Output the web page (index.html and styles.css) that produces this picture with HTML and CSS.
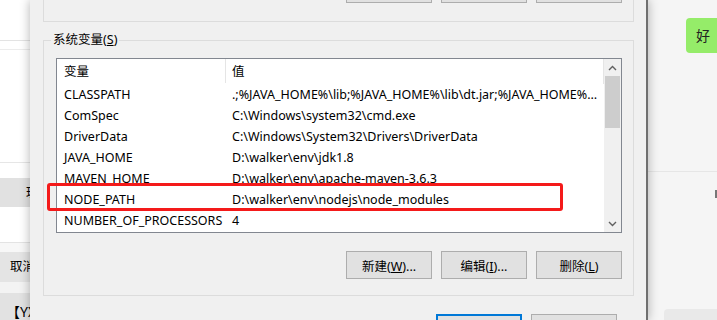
FILE: index.html
```html
<!DOCTYPE html>
<html lang="zh-CN">
<head>
  <meta charset="UTF-8" />
  <title>环境变量</title>
  <link rel="stylesheet" href="styles.css">
</head>
<body>
  <div class="screen">
    <div class="bg-app">
      <div class="bg-block bg-top"></div>
      <div class="bg-block bg-gap"></div>
      <div class="bg-block bg-main"></div>
      <div class="bg-block bg-gap2"></div>
      <div class="bg-block bg-tab">理</div>
      <div class="bg-block bg-main2"></div>
      <div class="bg-block bg-cancel">取消</div>
      <div class="bg-block bg-gap3"></div>
      <div class="bg-block bg-foot">【YX</div>
    </div>

    <div class="dialog">
      <div class="group group-user">
        <div class="btn-row btn-row-top">
          <button class="btn"></button>
          <button class="btn"></button>
          <button class="btn"></button>
        </div>
      </div>

      <div class="group group-sys">
        <div class="group-label">系统变量(<u>S</u>)</div>
        <div class="list">
          <div class="list-body">
            <div class="list-head">
              <span class="col-name">变量</span>
              <span class="col-value">值</span>
            </div>
            <div class="list-row"><span class="col-name">CLASSPATH</span><span class="col-value">.;%JAVA_HOME%\lib;%JAVA_HOME%\lib\dt.jar;%JAVA_HOME%\lib\tools.jar</span></div>
            <div class="list-row"><span class="col-name">ComSpec</span><span class="col-value">C:\Windows\system32\cmd.exe</span></div>
            <div class="list-row"><span class="col-name">DriverData</span><span class="col-value">C:\Windows\System32\Drivers\DriverData</span></div>
            <div class="list-row"><span class="col-name">JAVA_HOME</span><span class="col-value">D:\walker\env\jdk1.8</span></div>
            <div class="list-row"><span class="col-name">MAVEN_HOME</span><span class="col-value">D:\walker\env\apache-maven-3.6.3</span></div>
            <div class="list-row"><span class="col-name">NODE_PATH</span><span class="col-value">D:\walker\env\nodejs\node_modules</span></div>
            <div class="list-row"><span class="col-name">NUMBER_OF_PROCESSORS</span><span class="col-value">4</span></div>
            <div class="list-row"><span class="col-name">OS</span><span class="col-value">Windows_NT</span></div>
          </div>
          <div class="scrollbar">
            <div class="sb-arrow">
              <svg width="9" height="6" viewBox="0 0 9 6"><path d="M1 5 L4.5 1.5 L8 5" fill="none" stroke="#606060" stroke-width="1.4"/></svg>
            </div>
            <div class="sb-thumb"></div>
            <div class="sb-track"></div>
            <div class="sb-arrow">
              <svg width="9" height="6" viewBox="0 0 9 6"><path d="M1 1 L4.5 4.5 L8 1" fill="none" stroke="#606060" stroke-width="1.4"/></svg>
            </div>
          </div>
        </div>

        <div class="btn-row">
          <button class="btn">新建(<u>W</u>)...</button>
          <button class="btn">编辑(<u>I</u>)...</button>
          <button class="btn">删除(<u>L</u>)</button>
        </div>

        <div class="highlight"></div>
      </div>

      <div class="dialog-footer">
        <button class="btn btn-default"></button>
        <button class="btn"></button>
      </div>
    </div>

    <div class="chat">
      <div class="bubble">好</div>
      <div class="chat-line"></div>
      <div class="chat-mark"></div>
      <div class="chat-input"></div>
    </div>
  </div>
</body>
</html>
```

FILE: styles.css
```css
body {
  margin: 0;
  overflow: hidden;
  font-family: "Noto Sans", "Noto Sans CJK SC", sans-serif;
  font-size: 12.5px;
  color: #000;
}

.screen {
  display: flex;
  width: 717px;
  height: 320px;
  overflow: hidden;
  background: #f5f5f5;
}

/* background window on the left */
.bg-app {
  width: 30px;
  flex-shrink: 0;
  overflow: hidden;
  background: #fff;
  white-space: nowrap;
}

.bg-block {
  box-sizing: border-box;
}

.bg-top {
  height: 41px;
  border-bottom: 1px solid #e3e3e3;
}

.bg-gap {
  height: 9px;
  border-bottom: 1px solid #ececec;
}

.bg-main {
  height: 113px;
  border-bottom: 1px solid #e6e6e6;
}

.bg-gap2 {
  height: 15px;
}

.bg-tab {
  height: 29px;
  line-height: 29px;
  padding-left: 26px;
  background: #e1e1e1;
}

.bg-main2 {
  height: 36px;
  border-bottom: 1px solid #e3e3e3;
}

.bg-cancel {
  height: 39px;
  line-height: 30px;
  padding-top: 9px;
  padding-left: 10px;
  background: linear-gradient(#f7f7f7 0, #f7f7f7 9px, #e4e4e4 9px);
}

.bg-gap3 {
  height: 11px;
  background: #f3f3f3;
}

.bg-foot {
  height: 40px;
  line-height: 38px;
  padding-left: 6px;
  background: #e2e2e2;
  font-size: 14px;
}

/* dialog */
.dialog {
  position: relative;
  z-index: 1;
  width: 618px;
  flex-shrink: 0;
  box-sizing: border-box;
  padding: 0 12px 0 13px;
  background: #f0f0f0;
  border-right: 2px solid #6f6f6f;
  box-shadow: 0 0 10px rgba(0, 0, 0, 0.3);
}

.group {
  border: 1px solid #dcdcdc;
}

.group-user {
  display: flow-root;
  height: 21px;
  border-top: none;
  padding-right: 11px;
}

.btn-row {
  display: flex;
  justify-content: flex-end;
  gap: 9px;
}

.btn-row-top {
  margin-top: -25px;
}

.btn {
  width: 86px;
  height: 28px;
  box-sizing: border-box;
  padding: 0;
  border: 1px solid #adadad;
  background: #e1e1e1;
  font-family: "Noto Sans", "Noto Sans CJK SC", sans-serif;
  font-size: 12.5px;
  color: #000;
}

.group-sys {
  position: relative;
  margin-top: 18px;
  padding: 17px 11px 16px 12px;
}

.group-label {
  position: absolute;
  top: -10px;
  left: 7px;
  padding: 0 2px;
  line-height: 18px;
  background: #f0f0f0;
}

.list {
  display: flex;
  height: 175px;
  box-sizing: border-box;
  border: 1px solid #828790;
  background: #fff;
}

.list-body {
  flex: 1;
  overflow: hidden;
}

.list-head,
.list-row {
  display: flex;
  white-space: nowrap;
}

.list-head {
  height: 25px;
  line-height: 25px;
  border-right: 1px solid #e5e5e5;
}

.list-row {
  height: 21px;
  line-height: 21px;
}

.col-name {
  width: 169px;
  flex-shrink: 0;
  box-sizing: border-box;
  padding-left: 7px;
}

.list-head .col-name {
  border-right: 1px solid #e5e5e5;
  height: 24px;
}

.col-value {
  flex: 1;
  min-width: 0;
  padding-left: 6px;
  padding-right: 6px;
  overflow: hidden;
  text-overflow: ellipsis;
}

.scrollbar {
  width: 17px;
  display: flex;
  flex-direction: column;
  background: #f0f0f0;
}

.sb-arrow {
  height: 17px;
  display: flex;
  align-items: center;
  justify-content: center;
}

.sb-thumb {
  height: 52px;
  margin: 0 1px;
  background: #cdcdcd;
}

.sb-track {
  flex: 1;
}

.group-sys .btn-row {
  margin-top: 18px;
}

.highlight {
  position: absolute;
  left: 3px;
  top: 142px;
  width: 516px;
  height: 28px;
  box-sizing: border-box;
  border: 3px solid #f41a1a;
  border-radius: 3px;
}

.dialog-footer {
  display: flex;
  gap: 9px;
  margin-top: 18px;
  padding-left: 393px;
}

.btn-default {
  border: 2px solid #0078d7;
}

/* chat window on the right */
.chat {
  flex: 1;
  background: #f5f5f5;
  overflow: hidden;
}

.bubble {
  margin: 18px 0 0 38px;
  height: 35px;
  line-height: 35px;
  padding-left: 10px;
  background: #95ec69;
  border-radius: 4px 0 0 4px;
  font-family: "Noto Sans CJK SC", sans-serif;
  font-size: 14px;
  color: #222;
}

.chat-line {
  margin-top: 118px;
  border-top: 1px solid #e6e6e6;
}

.chat-mark {
  margin: 18px 0 0 67px;
  width: 3px;
  height: 8px;
  background: #777;
}

.chat-input {
  margin: 111px 0 0 16px;
  height: 20px;
  background: #e9e9e9;
  border-radius: 4px 0 0 0;
}
```
